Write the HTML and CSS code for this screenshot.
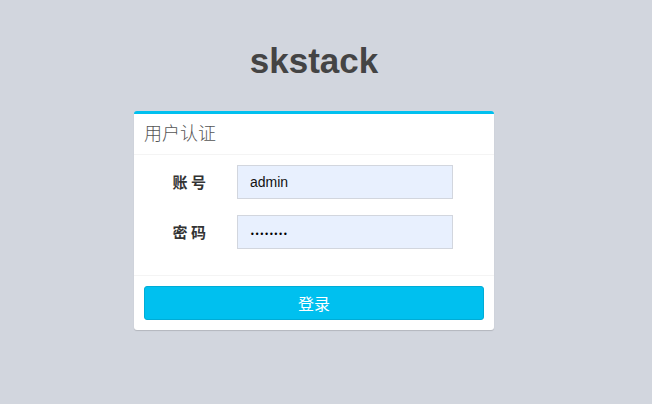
FILE: index.html
```html
<!DOCTYPE html>
<html lang="zh">
<head>
<meta charset="utf-8">
<title>skstack</title>
<link rel="stylesheet" href="styles.css">
</head>
<body>
<div class="login-box">
  <div class="login-logo">skstack</div>
  <div class="box">
    <div class="box-header">用户认证</div>
    <div class="box-body">
      <div class="form-group">
        <label class="label">账 号</label>
        <div class="field"><span class="input">admin</span></div>
      </div>
      <div class="form-group">
        <label class="label">密 码</label>
        <div class="field"><span class="input pw">••••••••</span></div>
      </div>
    </div>
    <div class="box-footer">
      <button class="btn" type="button">登录</button>
    </div>
  </div>
</div>
</body>
</html>
```
FILE: styles.css
```css
html, body {
  margin: 0;
  padding: 0;
}
body {
  background: #d2d6de;
  font-family: "Liberation Sans", "Noto Sans CJK SC", sans-serif;
  font-size: 14px;
  color: #333;
  height: 404px;
}
.login-box {
  width: 360px;
  margin: 0 0 0 134px;
  padding-top: 41px;
}
.login-logo {
  font-size: 35px;
  line-height: 40px;
  font-weight: bold;
  color: #444;
  text-align: center;
  margin-bottom: 30px;
}
.box {
  background: #fff;
  border-top: 3px solid #00c0ef;
  border-radius: 3px;
  box-shadow: 0 1px 1px rgba(0,0,0,0.15);
}
.box-header {
  padding: 8px 10px 12px;
  height: 20px;
  font-size: 18px;
  line-height: 20px;
  color: #555;
  font-family: "Noto Sans CJK SC", sans-serif;
  font-weight: 300;
  border-bottom: 1px solid #f4f4f4;
}
.box-body {
  padding: 10px 10px 10px;
}
.form-group {
  display: flex;
  align-items: flex-start;
  margin-bottom: 16px;
}
.label {
  width: 62px;
  text-align: right;
  padding-top: 7px;
  line-height: 20px;
  font-size: 15px;
  font-weight: bold;
  font-family: "Noto Sans CJK SC", sans-serif;
  color: #333;
  white-space: nowrap;
}
.field {
  margin-left: 31px;
  width: 216px;
}
.input {
  display: block;
  box-sizing: border-box;
  height: 34px;
  padding: 6px 12px;
  line-height: 20px;
  background: #e8f0fe;
  border: 1px solid #d2d6de;
  color: #111;
  font-family: "Liberation Sans", sans-serif;
  font-size: 14px;
}
.pw {
  padding: 9px 12px 3px;
  font-size: 8px;
  color: #000;
  font-family: "DejaVu Sans", sans-serif;
}
.box-footer {
  border-top: 1px solid #f4f4f4;
  padding: 10px;
}
.btn {
  display: block;
  width: 100%;
  height: 34px;
  background: #00c0ef;
  border: 1px solid #00acd6;
  border-radius: 3px;
  color: #fff;
  font-size: 16px;
  font-family: "Noto Sans CJK SC", sans-serif;
  padding: 0;
}
```
